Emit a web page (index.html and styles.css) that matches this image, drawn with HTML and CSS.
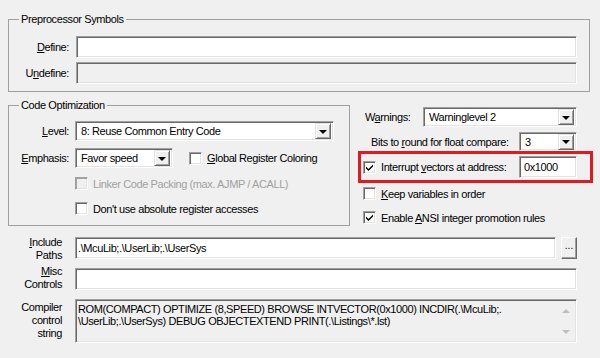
FILE: index.html
```html
<!DOCTYPE html>
<html lang="en">
<head>
  <meta charset="UTF-8">
  <title>C51 Options</title>
  <link rel="stylesheet" href="styles.css">
</head>
<body>

<div class="dialog">

  <fieldset class="group group-pre">
    <legend>Preprocessor Symbols</legend>
    <div class="pre-grid">
      <span class="lbl"><u>D</u>efine:</span>
      <div class="edit"></div>
      <span class="lbl">U<u>n</u>define:</span>
      <div class="edit edit-off"></div>
    </div>
  </fieldset>

  <div class="middle">
    <fieldset class="group group-opt">
      <legend>Code Optimization</legend>
      <div class="opt-row">
        <span class="lbl lbl-opt"><u>L</u>evel:</span>
        <div class="combo combo-level">
          <span class="combo-text">8: Reuse Common Entry Code</span>
          <span class="drop"></span>
        </div>
      </div>
      <div class="opt-row opt-row-emph">
        <span class="lbl lbl-opt"><u>E</u>mphasis:</span>
        <div class="combo combo-emph">
          <span class="combo-text">Favor speed</span>
          <span class="drop"></span>
        </div>
        <div class="check check-global">
          <span class="box"></span>
          <span><u>G</u>lobal Register Coloring</span>
        </div>
      </div>
      <div class="check check-opt check-linker disabled">
        <span class="box"></span>
        <span>Linker Code Packing (max. AJMP / ACALL)</span>
      </div>
      <div class="check check-opt check-abs">
        <span class="box"></span>
        <span>Don't use absolute register accesses</span>
      </div>
    </fieldset>

    <div class="right">
      <div class="warn-row">
        <span class="warn-lbl">W<u>a</u>rnings:</span>
        <div class="combo combo-warn">
          <span class="combo-text">Warninglevel 2</span>
          <span class="drop"></span>
        </div>
      </div>
      <div class="bits-row">
        <span class="bits-lbl">Bits to <u>r</u>ound for float compare:</span>
        <div class="combo combo-bits">
          <span class="combo-text">3</span>
          <span class="drop"></span>
        </div>
      </div>
      <div class="mark">
        <div class="check">
          <span class="box checked">
            <svg width="9" height="9" viewBox="0 0 9 9"><path d="M1 3.5 L3.5 6 L8 1.5 L8 3.5 L3.5 8 L1 5.5 Z" fill="#000"/></svg>
          </span>
          <span>Interrupt <u>v</u>ectors at address:</span>
        </div>
        <div class="edit edit-addr">0x1000</div>
      </div>
      <div class="check check-keep">
        <span class="box"></span>
        <span><u>K</u>eep variables in order</span>
      </div>
      <div class="check check-ansi">
        <span class="box checked">
          <svg width="9" height="9" viewBox="0 0 9 9"><path d="M1 3.5 L3.5 6 L8 1.5 L8 3.5 L3.5 8 L1 5.5 Z" fill="#000"/></svg>
        </span>
        <span>Enable <u>A</u>NSI integer promotion rules</span>
      </div>
    </div>
  </div>

  <div class="bottom-grid">
    <span class="lbl lbl-multi lbl-inc"><u>I</u>nclude<br>Paths</span>
    <div class="inc-row">
      <div class="edit edit-inc">.\McuLib;.\UserLib;.\UserSys</div>
      <div class="browse">...</div>
    </div>
    <span class="lbl lbl-multi lbl-misc"><u>M</u>isc<br>Controls</span>
    <div class="edit"></div>
    <span class="lbl lbl-multi lbl-ctrl">Compiler<br>control<br>string</span>
    <div class="edit edit-off memo">
      <div class="memo-text">ROM(COMPACT) OPTIMIZE (8,SPEED) BROWSE INTVECTOR(0x1000) INCDIR(.\McuLib;.<br>\UserLib;.\UserSys) DEBUG OBJECTEXTEND PRINT(.\Listings\*.lst)</div>
      <div class="scroll">
        <span class="arrow-up"></span>
        <span class="arrow-down"></span>
      </div>
    </div>
  </div>

</div>

</body>
</html>
```

FILE: styles.css
```css
body {
  margin: 0;
  background-color: #f0f0f0;
  font-family: 'Liberation Sans', Arial, sans-serif;
  font-size: 11px;
  letter-spacing: -0.4px;
  color: #000;
}

u {
  text-underline-offset: 1px;
}

.dialog {
  width: 600px;
  height: 358px;
  box-sizing: border-box;
  padding: 13px 0 0 8px;
}

/* Group boxes */
.group {
  margin: 0;
  padding: 0;
  border: 1px solid #a0a0a0;
  box-sizing: border-box;
  min-inline-size: 0;
}

.group legend {
  margin-left: 10px;
  padding: 0 2px;
  line-height: 13px;
}

.group-pre {
  width: 582px;
  padding: 10px 0 7px 0;
}

.pre-grid {
  display: grid;
  grid-template-columns: 61px 501px;
  grid-template-rows: 22px 22px;
  column-gap: 6px;
  row-gap: 4px;
}

.lbl {
  text-align: right;
  align-self: center;
  padding-right: 1px;
}

/* Edit boxes */
.edit {
  background: #fff;
  border-top: 1px solid #a0a0a0;
  border-left: 1px solid #a0a0a0;
  border-right: 1px solid #fff;
  border-bottom: 1px solid #fff;
  box-shadow: inset 1px 1px #696969, inset -1px -1px #e3e3e3;
  box-sizing: border-box;
  padding: 3px 3px 0 3px;
  line-height: 14px;
  white-space: nowrap;
  overflow: hidden;
}

.edit-off {
  background: #f0f0f0;
}

/* Combo boxes */
.combo {
  display: flex;
  align-items: center;
  height: 20px;
  background: #fff;
  border-top: 1px solid #a0a0a0;
  border-left: 1px solid #a0a0a0;
  border-right: 1px solid #fff;
  border-bottom: 1px solid #fff;
  box-shadow: inset 1px 1px #696969, inset -1px -1px #e3e3e3;
  box-sizing: border-box;
  padding: 2px 2px 2px 5px;
}

.combo-text {
  flex: 1;
  white-space: nowrap;
}

.drop {
  width: 16px;
  height: 16px;
  box-sizing: border-box;
  background: #f0f0f0;
  border-top: 1px solid #e3e3e3;
  border-left: 1px solid #e3e3e3;
  border-right: 1px solid #696969;
  border-bottom: 1px solid #696969;
  box-shadow: inset 1px 1px #fff, inset -1px -1px #a0a0a0;
  display: flex;
  justify-content: center;
  align-items: center;
}

.drop::after {
  content: "";
  border-left: 4px solid transparent;
  border-right: 4px solid transparent;
  border-top: 4px solid #000;
  margin-top: 1px;
}

/* Check boxes */
.check {
  display: flex;
  align-items: center;
  height: 13px;
  white-space: nowrap;
}

.box {
  width: 13px;
  height: 13px;
  box-sizing: border-box;
  background: #fff;
  border-top: 1px solid #a0a0a0;
  border-left: 1px solid #a0a0a0;
  border-right: 1px solid #fff;
  border-bottom: 1px solid #fff;
  box-shadow: inset 1px 1px #696969, inset -1px -1px #e3e3e3;
  margin-right: 5px;
  display: flex;
  justify-content: center;
  align-items: center;
  flex: none;
}

.box svg {
  display: block;
}

.disabled {
  color: #a0a0a0;
}

.disabled .box {
  background: #f0f0f0;
  box-shadow: inset 1px 1px #a0a0a0, inset -1px -1px #e3e3e3;
}

/* Code optimization */
.middle {
  display: flex;
  align-items: flex-start;
  margin-top: 7px;
}

.group-opt {
  width: 342px;
  padding: 9px 0 10px 0;
}

.opt-row {
  display: flex;
  align-items: center;
}

.opt-row-emph {
  margin-top: 7px;
}

.lbl-opt {
  width: 61px;
  margin-right: 5px;
  box-sizing: border-box;
}

.combo-level {
  width: 259px;
}

.combo-emph {
  width: 98px;
}

.check-global {
  margin-left: 16px;
}

.check-opt {
  margin-left: 66px;
}

.check-linker {
  margin-top: 9px;
}

.check-abs {
  margin-top: 12px;
}

/* Right column */
.right {
  width: 235px;
  margin-left: 8px;
  padding-top: 8px;
}

.warn-row,
.bits-row {
  display: flex;
  align-items: center;
}

.warn-lbl {
  width: 58px;
  padding-left: 7px;
}

.combo-warn {
  width: 154px;
}

.bits-row {
  margin-top: 5px;
}

.bits-lbl {
  width: 148px;
  padding-left: 13px;
}

.combo-bits {
  width: 58px;
  height: 19px;
}

.mark {
  display: flex;
  align-items: center;
  justify-content: space-between;
  border: 3px solid #e3191f;
  padding: 2px 13px 2px 2px;
}

.edit-addr {
  width: 58px;
  height: 22px;
  padding-left: 4px;
}

.check-keep {
  margin-top: 4px;
  padding-left: 5px;
}

.check-ansi {
  margin-top: 11px;
  padding-left: 5px;
}

/* Bottom fields */
.bottom-grid {
  display: grid;
  grid-template-columns: 54px 502px;
  grid-template-rows: 22px 22px 44px;
  column-gap: 13px;
  row-gap: 9px;
  margin-top: 11px;
}

.lbl-multi {
  align-self: start;
  line-height: 13px;
  padding-right: 0;
}

.lbl-inc {
  margin-top: -1px;
}

.lbl-misc {
  margin-top: -3px;
}

.lbl-ctrl {
  margin-top: 2px;
}

.inc-row {
  display: flex;
  gap: 5px;
}

.edit-inc {
  width: 482px;
  padding-left: 2px;
}

.browse {
  width: 16px;
  height: 22px;
  box-sizing: border-box;
  background: #f0f0f0;
  border-top: 1px solid #fff;
  border-left: 1px solid #fff;
  border-right: 1px solid #696969;
  border-bottom: 1px solid #696969;
  box-shadow: inset -1px -1px #a0a0a0;
  text-align: center;
  line-height: 16px;
  font-size: 10px;
  letter-spacing: 0;
}

.memo {
  display: flex;
  padding: 2px 2px 2px 2px;
  white-space: normal;
}

.memo-text {
  flex: 1;
  line-height: 12px;
  padding-top: 1px;
  white-space: nowrap;
}

.scroll {
  width: 17px;
  display: flex;
  flex-direction: column;
  justify-content: space-between;
  align-items: center;
  padding: 7px 0 6px 0;
}

.arrow-up {
  border-left: 4px solid transparent;
  border-right: 4px solid transparent;
  border-bottom: 4px solid #bfbfbf;
}

.arrow-down {
  border-left: 4px solid transparent;
  border-right: 4px solid transparent;
  border-top: 4px solid #bfbfbf;
}
```
